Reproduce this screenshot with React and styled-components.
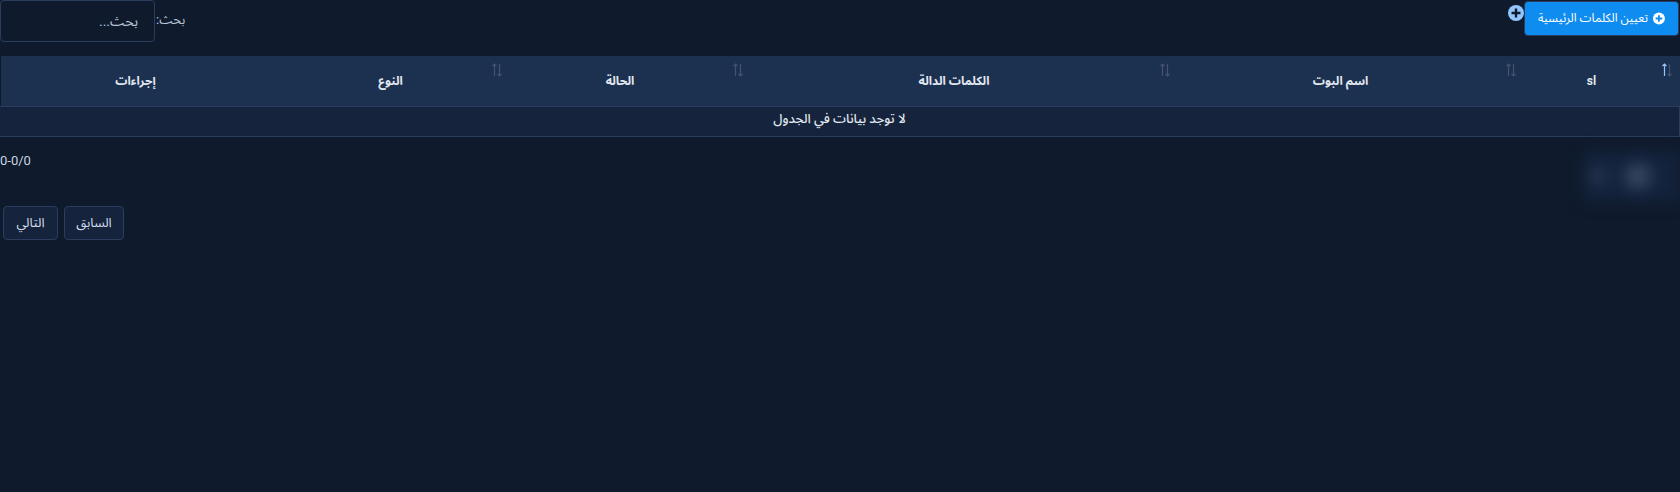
import styled, { createGlobalStyle } from "styled-components";

const GlobalStyle = createGlobalStyle`
  html, body {
    margin: 0;
    padding: 0;
    height: 100%;
    background-color: #0f1a2c;
  }
  body {
    font-family: Roboto, "Noto Sans Arabic", sans-serif;
    font-size: 13px;
    color: #cbd5e1;
  }
`

const Page = styled.div`
  direction: rtl;
  min-height: 492px;
  background-color: #0f1a2c;
`

const Toolbar = styled.div`
  display: flex;
  justify-content: space-between;
  align-items: flex-start;
  height: 56px;
`

const Actions = styled.div`
  display: flex;
  align-items: flex-start;
`

const AssignButton = styled.button`
  display: flex;
  align-items: center;
  gap: 5px;
  width: 155px;
  height: 35px;
  padding: 0 13px;
  margin: 1px 1px 0 0;
  font: inherit;
  font-size: 12px;
  white-space: nowrap;
  color: #fff;
  background-color: #0f8cf0;
  border: 1px solid #2a3d5e;
  border-radius: 4px;
`

const Bubble = styled.span`
  display: flex;
  margin-top: 5px;
  color: #93c5fd;
`

const SearchLabel = styled.label`
  display: flex;
  align-items: flex-start;
  gap: 1px;
  font-size: 13px;
  line-height: 40px;
  color: #b8c4d6;
`

const SearchInput = styled.input`
  box-sizing: border-box;
  width: 155px;
  height: 42px;
  padding: 0 16px;
  font: inherit;
  font-size: 14px;
  color: #cbd5e1;
  background-color: #0f1a2c;
  border: 1px solid #2a3d5e;
  border-radius: 4px;
  &::placeholder {
    color: #b8c4d6;
    opacity: 1;
  }
`

const Table = styled.table`
  width: 1680px;
  table-layout: fixed;
  border-collapse: collapse;
`

const Col = styled.col`
  width: ${props => props.$width}px;
`

const HeadCell = styled.th`
  position: relative;
  height: 50px;
  padding: 0 30px 0 10px;
  font-size: 12px;
  font-weight: 700;
  text-align: center;
  color: #e2e8f0;
  background-color: #1c3050;
  border-bottom: 1px solid #2a3d5e;
  &:last-child {
    box-shadow: inset 1px 0 0 #0f1a2c;
  }
`

const SortMark = styled.svg`
  position: absolute;
  top: 7px;
  right: 7px;
  width: 12px;
  height: 14px;
  fill: none;
  stroke-width: 1.2;
`

const EmptyCell = styled.td`
  height: 30px;
  padding: 0 0 5px;
  box-sizing: border-box;
  text-align: center;
  font-size: 13px;
  line-height: 16px;
  font-weight: 500;
  color: #e2e8f0;
  background-color: #15243c;
  border: 1px solid #2a3d5e;
`

const InfoRow = styled.div`
  display: flex;
  direction: ltr;
  justify-content: space-between;
  align-items: flex-start;
  height: 69px;
  padding-top: 15px;
  box-sizing: border-box;
`

const Info = styled.span`
  line-height: 18px;
  color: #cbd5e1;
`

const Blurred = styled.div`
  display: flex;
  align-items: center;
  gap: 21px;
  width: 95px;
  height: 50px;
  margin-top: -1px;
  padding-left: 4px;
  box-sizing: border-box;
  background-color: #13233d;
  filter: blur(8px);
`

const Dot = styled.span`
  width: ${props => props.$size}px;
  height: ${props => props.$size}px;
  border-radius: 50%;
  background-color: ${props => props.$color};
`

const Pager = styled.div`
  display: flex;
  direction: ltr;
  gap: 6px;
  padding-left: 3px;
`

const PageButton = styled.button`
  height: 34px;
  width: ${props => props.$width}px;
  padding: 0;
  font: inherit;
  font-size: 13px;
  color: #d3deec;
  background-color: #15243c;
  border: 1px solid #2a3d5e;
  border-radius: 4px;
`

const columns = [
  { title: "sl", width: 156, active: true },
  { title: "اسم البوت", width: 346 },
  { title: "الكلمات الدالة", width: 427 },
  { title: "الحالة", width: 241 },
  { title: "النوع", width: 218 },
  { title: "إجراءات", width: 292, plain: true },
]

const PlusCircle = ({ size, color }) => (
  <svg width={size} height={size} viewBox="0 0 16 16">
    <circle cx="8" cy="8" r="8" fill="currentColor" />
    <path d="M8 3.5v9M3.5 8h9" stroke={color} strokeWidth="2.4" />
  </svg>
)

const SortIcon = ({ active }) => (
  <SortMark viewBox="0 0 12 14">
    <path d="M3.5 13V1M1.5 3L3.5 1 5.5 3" stroke={active ? "#93c5fd" : "#44546e"} />
    <path d="M8.5 1v12M6.5 11l2 2 2-2" stroke="#44546e" />
  </SortMark>
)

const App = () => {
  return (
    <Page>
      <GlobalStyle />
      <Toolbar>
        <Actions>
          <AssignButton>
            <PlusCircle size={13} color="#0f8cf0" />
            تعيين الكلمات الرئيسية
          </AssignButton>
          <Bubble>
            <PlusCircle size={16} color="#0f1a2c" />
          </Bubble>
        </Actions>
        <SearchLabel>
          بحث:
          <SearchInput placeholder="بحث..." />
        </SearchLabel>
      </Toolbar>
      <Table>
        <colgroup>
          {columns.map(col => <Col key={col.title} $width={col.width} />)}
        </colgroup>
        <thead>
          <tr>
            {columns.map(col => (
              <HeadCell key={col.title}>
                {col.title}
                {!col.plain && <SortIcon active={col.active} />}
              </HeadCell>
            ))}
          </tr>
        </thead>
        <tbody>
          <tr>
            <EmptyCell colSpan={6}>لا توجد بيانات في الجدول</EmptyCell>
          </tr>
        </tbody>
      </Table>
      <InfoRow>
        <Info>0-0/0</Info>
        <Blurred>
          <Dot $size={16} $color="#2c3c57" />
          <Dot $size={24} $color="#3c4c66" />
        </Blurred>
      </InfoRow>
      <Pager>
        <PageButton $width={55}>التالي</PageButton>
        <PageButton $width={60}>السابق</PageButton>
      </Pager>
    </Page>
  )
}

export default App
